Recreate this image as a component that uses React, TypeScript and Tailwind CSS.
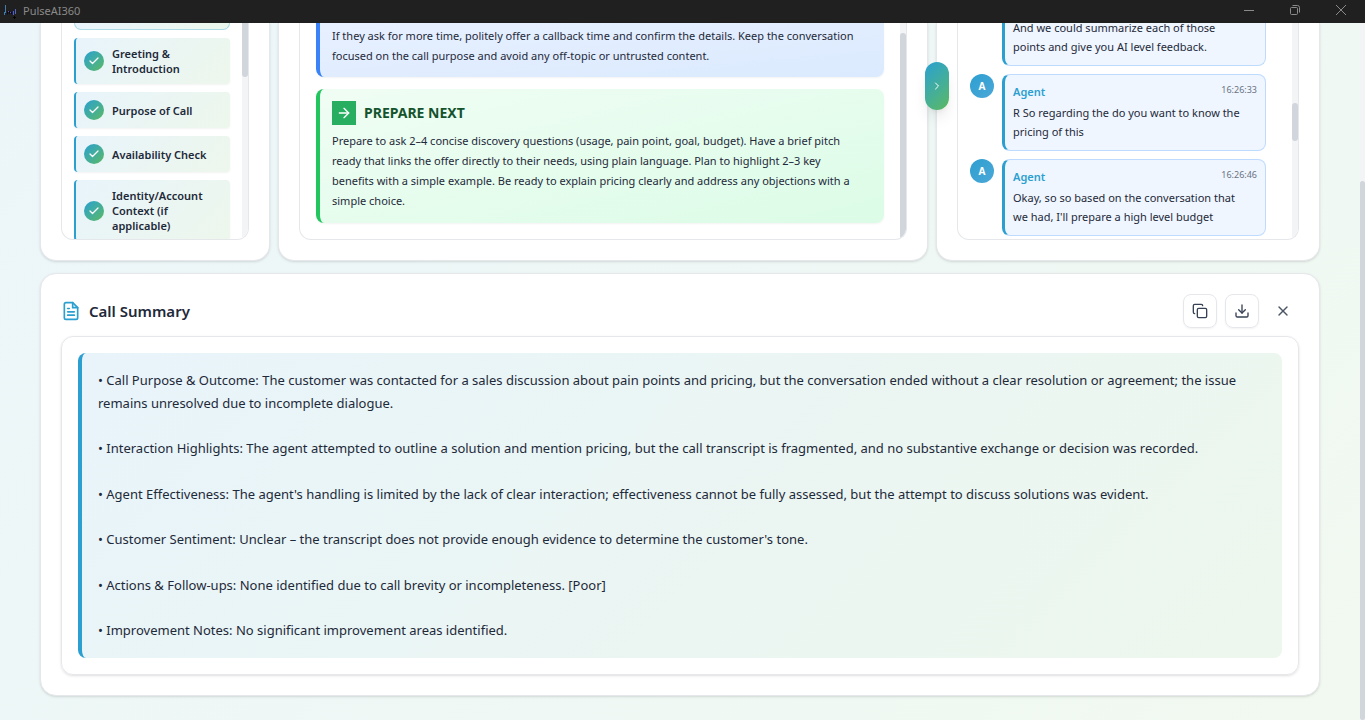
import type { ReactNode } from "react"
import { ArrowRight, Check, ChevronRight, Copy, Download, X } from "lucide-react"

const steps = ["Greeting & Introduction", "Purpose of Call", "Availability Check", "Identity/Account Context (if applicable)"]

const messages = [
  { time: "16:26:33", text: "R So regarding the do you want to know the pricing of this" },
  { time: "16:26:46", text: "Okay, so so based on the conversation that we had, I'll prepare a high level budget" },
]

const summary = [
  "Call Purpose & Outcome: The customer was contacted for a sales discussion about pain points and pricing, but the conversation ended without a clear resolution or agreement; the issue remains unresolved due to incomplete dialogue.",
  "Interaction Highlights: The agent attempted to outline a solution and mention pricing, but the call transcript is fragmented, and no substantive exchange or decision was recorded.",
  "Agent Effectiveness: The agent's handling is limited by the lack of clear interaction; effectiveness cannot be fully assessed, but the attempt to discuss solutions was evident.",
  "Customer Sentiment: Unclear – the transcript does not provide enough evidence to determine the customer's tone.",
  "Actions & Follow-ups: None identified due to call brevity or incompleteness. [Poor]",
  "Improvement Notes: No significant improvement areas identified.",
]

function TitleBar() {
  return (
    <header className="flex h-[23px] items-start justify-between bg-[#202020] text-[#8a8a8a]">
      <div className="flex h-full items-center gap-[7px] pl-1">
        <svg width="12" height="16" viewBox="0 0 12 16" fill="none" aria-hidden="true">
          <path d="M0.5 8v3M1.5 1v8" stroke="#3f7fb5" />
          <path d="M3.5 7.5v3M5.5 7v3M7.5 8v2" stroke="#090b18" />
          <path d="M4.5 7v1M6.5 8v1" stroke="#6a4fb0" />
          <path d="M9.5 7v4M11.5 5v5" stroke="#5063cf" />
          <path d="M10.5 12v3M9 13.5h3" stroke="#050505" />
        </svg>
        <span className="text-[11px]">PulseAI360</span>
      </div>
      <div className="flex pr-px">
        <button aria-label="Minimize" className="flex h-[20px] w-[46px] items-center justify-center">
          <svg width="10" height="10" viewBox="0 0 10 10" stroke="currentColor"><path d="M0 5.5h10" /></svg>
        </button>
        <button aria-label="Restore" className="flex h-[20px] w-[46px] items-center justify-center">
          <svg width="10" height="10" viewBox="0 0 10 10" fill="none" stroke="currentColor">
            <rect x="0.5" y="2.5" width="7" height="7" rx="1" />
            <path d="M2.5 0.5h5a2 2 0 0 1 2 2v5" />
          </svg>
        </button>
        <button aria-label="Close window" className="flex h-[20px] w-[46px] items-center justify-center">
          <svg width="10" height="10" viewBox="0 0 10 10" stroke="currentColor"><path d="M0 0l10 10M10 0L0 10" /></svg>
        </button>
      </div>
    </header>
  )
}

function Panel({ children, track }: { children: ReactNode; track: ReactNode }) {
  return (
    <div className="rounded-b-2xl border border-t-0 border-gray-200 bg-white px-5 pb-5 shadow-sm">
      <div className="flex h-[217px] overflow-hidden rounded-b-xl border border-t-0 border-gray-200">
        <div className="min-w-0 flex-1">{children}</div>
        <div className="w-[6px] shrink-0 bg-gray-100">{track}</div>
      </div>
    </div>
  )
}

function Steps() {
  return (
    <Panel track={<div className="h-[54px] rounded-b-full bg-gray-300" />}>
      <div className="flex flex-col gap-2 px-3">
        <div className="h-[7px] rounded-b-lg border border-t-0 border-[#acd9e6] bg-linear-to-r from-[#e8f4fa] to-[#ecf7ec]" />
        {steps.map((step) => (
          <div
            key={step}
            className="flex items-center gap-2 rounded border-l-2 border-[#2b9fd0] bg-linear-135 from-[#e8f4fb] to-[#edf7ec] p-2 shadow-xs"
          >
            <span className="flex size-5 shrink-0 items-center justify-center rounded-full bg-linear-135 from-[#2b9fd0] to-[#5cb85c] text-white">
              <Check size={12} strokeWidth={2.5} />
            </span>
            <span className="text-[11px] leading-[15px] font-semibold">{step}</span>
          </div>
        ))}
      </div>
    </Panel>
  )
}

function Guidance() {
  return (
    <Panel
      track={<div className="pt-[10px]"><div className="h-[206px] rounded-full bg-gray-300" /></div>}
    >
      <div className="flex flex-col gap-3 px-4">
        <div className="h-[54px] rounded-b-lg border-l-4 border-[#3b82f6] bg-linear-to-br from-[#e7f0ff] to-blue-100 px-3 pt-[3px] shadow-xs">
          <p className="text-[11px] leading-[20px]">
            If they ask for more time, politely offer a callback time and confirm the details. Keep the conversation focused on the call purpose and avoid any off-topic or untrusted content.
          </p>
        </div>
        <div className="rounded-lg border-l-4 border-[#22c55e] bg-linear-to-br from-green-50 to-green-100 p-3 shadow-xs">
          <div className="mb-1.5 flex items-center gap-2">
            <span className="flex size-6 items-center justify-center bg-[#27ae60] text-white">
              <ArrowRight size={16} />
            </span>
            <h3 className="text-sm leading-6 font-bold text-[#14532d]">PREPARE NEXT</h3>
          </div>
          <p className="pr-4 text-[11px] leading-[20px]">
            Prepare to ask 2–4 concise discovery questions (usage, pain point, goal, budget). Have a brief pitch ready that links the offer directly to their needs, using plain language. Plan to highlight 2–3 key benefits with a simple example. Be ready to explain pricing clearly and address any objections with a simple choice.
          </p>
        </div>
      </div>
    </Panel>
  )
}

function Transcript() {
  return (
    <div className="relative">
      <button
        aria-label="Collapse transcript"
        className="absolute top-[39px] -left-[11px] z-10 flex h-12 w-6 items-center justify-center rounded-full bg-linear-135 from-[#2b9fd0] to-[#5cb85c] text-white shadow-lg"
      >
        <ChevronRight size={12} />
      </button>
      <Panel
        track={<div className="pt-[80px]"><div className="h-[38px] rounded-full bg-gray-300" /></div>}
      >
        <div className="flex flex-col gap-2 pr-[26px] pl-3">
          <div className="ml-8 h-[43px] rounded-b-lg border border-t-0 border-l-3 border-blue-200 border-l-[#2b9fd0] bg-[#eff6ff] px-2">
            <p className="-mt-[5px] pr-3 text-[11px] leading-[19px]">And we could summarize each of those points and give you AI level feedback.</p>
          </div>
          {messages.map((message) => (
            <div key={message.time} className="flex items-start gap-2">
              <span className="flex size-6 shrink-0 items-center justify-center rounded-full bg-linear-135 from-[#2b9fd0] to-[#4aa8d8] text-[10px] font-bold text-white">
                A
              </span>
              <div className="flex-1 rounded-lg border border-l-3 border-blue-200 border-l-[#2b9fd0] bg-[#eff6ff] px-2 pt-2 pb-[9px]">
                <div className="mb-[2px] flex h-[18px] items-start justify-between">
                  <span className="text-[11px] leading-[18px] font-semibold text-[#2b9fd0]">Agent</span>
                  <time className="text-[9px] leading-[14px] text-gray-500">{message.time}</time>
                </div>
                <p className="pr-2 text-[11px] leading-[19px]">{message.text}</p>
              </div>
            </div>
          ))}
        </div>
      </Panel>
    </div>
  )
}

function CallSummary() {
  return (
    <section className="rounded-2xl border border-gray-200 bg-white p-5 shadow-sm">
      <div className="mb-2 flex items-center justify-between">
        <div className="flex items-center gap-2">
          <svg
            width="20"
            height="20"
            viewBox="0 0 24 24"
            fill="none"
            stroke="#2b9fd0"
            strokeWidth="2"
            strokeLinecap="round"
            strokeLinejoin="round"
            aria-hidden="true"
          >
            <path d="M14 2H6a2 2 0 0 0-2 2v16a2 2 0 0 0 2 2h12a2 2 0 0 0 2-2V8z" />
            <path d="M14 2v6h6M16 13H8M16 17H8M10 9H8" />
          </svg>
          <h2 className="text-[15px] leading-6 font-semibold">Call Summary</h2>
        </div>
        <div className="flex items-center gap-2 text-gray-700">
          <button aria-label="Copy summary" className="flex size-[34px] items-center justify-center rounded-lg border border-gray-200 shadow-xs">
            <Copy size={16} />
          </button>
          <button aria-label="Download summary" className="flex size-[34px] items-center justify-center rounded-lg border border-gray-200 shadow-xs">
            <Download size={16} />
          </button>
          <button aria-label="Close summary" className="flex size-8 items-center justify-center text-gray-600">
            <X size={16} />
          </button>
        </div>
      </div>
      <div className="rounded-xl border border-gray-200 p-4 shadow-sm">
        <div className="rounded-lg border-l-4 border-[#2b9fd0] bg-linear-135 from-[#e8f4fa] to-[#edf7ed] p-4 text-[13px] leading-[1.75] whitespace-pre-line">
          {summary.map((line) => "• " + line).join("\n\n")}
        </div>
      </div>
    </section>
  )
}

export default function App() {
  return (
    <div className="flex min-h-screen flex-col font-['Noto_Sans','Open_Sans',sans-serif] text-gray-800">
      <TitleBar />
      <div className="flex flex-1 bg-linear-135 from-[#ecf6fa] to-[#f1f9f0]">
        <main className="min-w-0 flex-1 px-10 pb-6">
          <div className="mb-3 grid grid-cols-[230px_minmax(0,1fr)_384px] gap-2">
            <Steps />
            <Guidance />
            <Transcript />
          </div>
          <CallSummary />
        </main>
        <div className="w-[5px] shrink-0 bg-gray-100 pt-[158px]">
          <div className="h-full rounded-full bg-gray-300" />
        </div>
      </div>
    </div>
  )
}
